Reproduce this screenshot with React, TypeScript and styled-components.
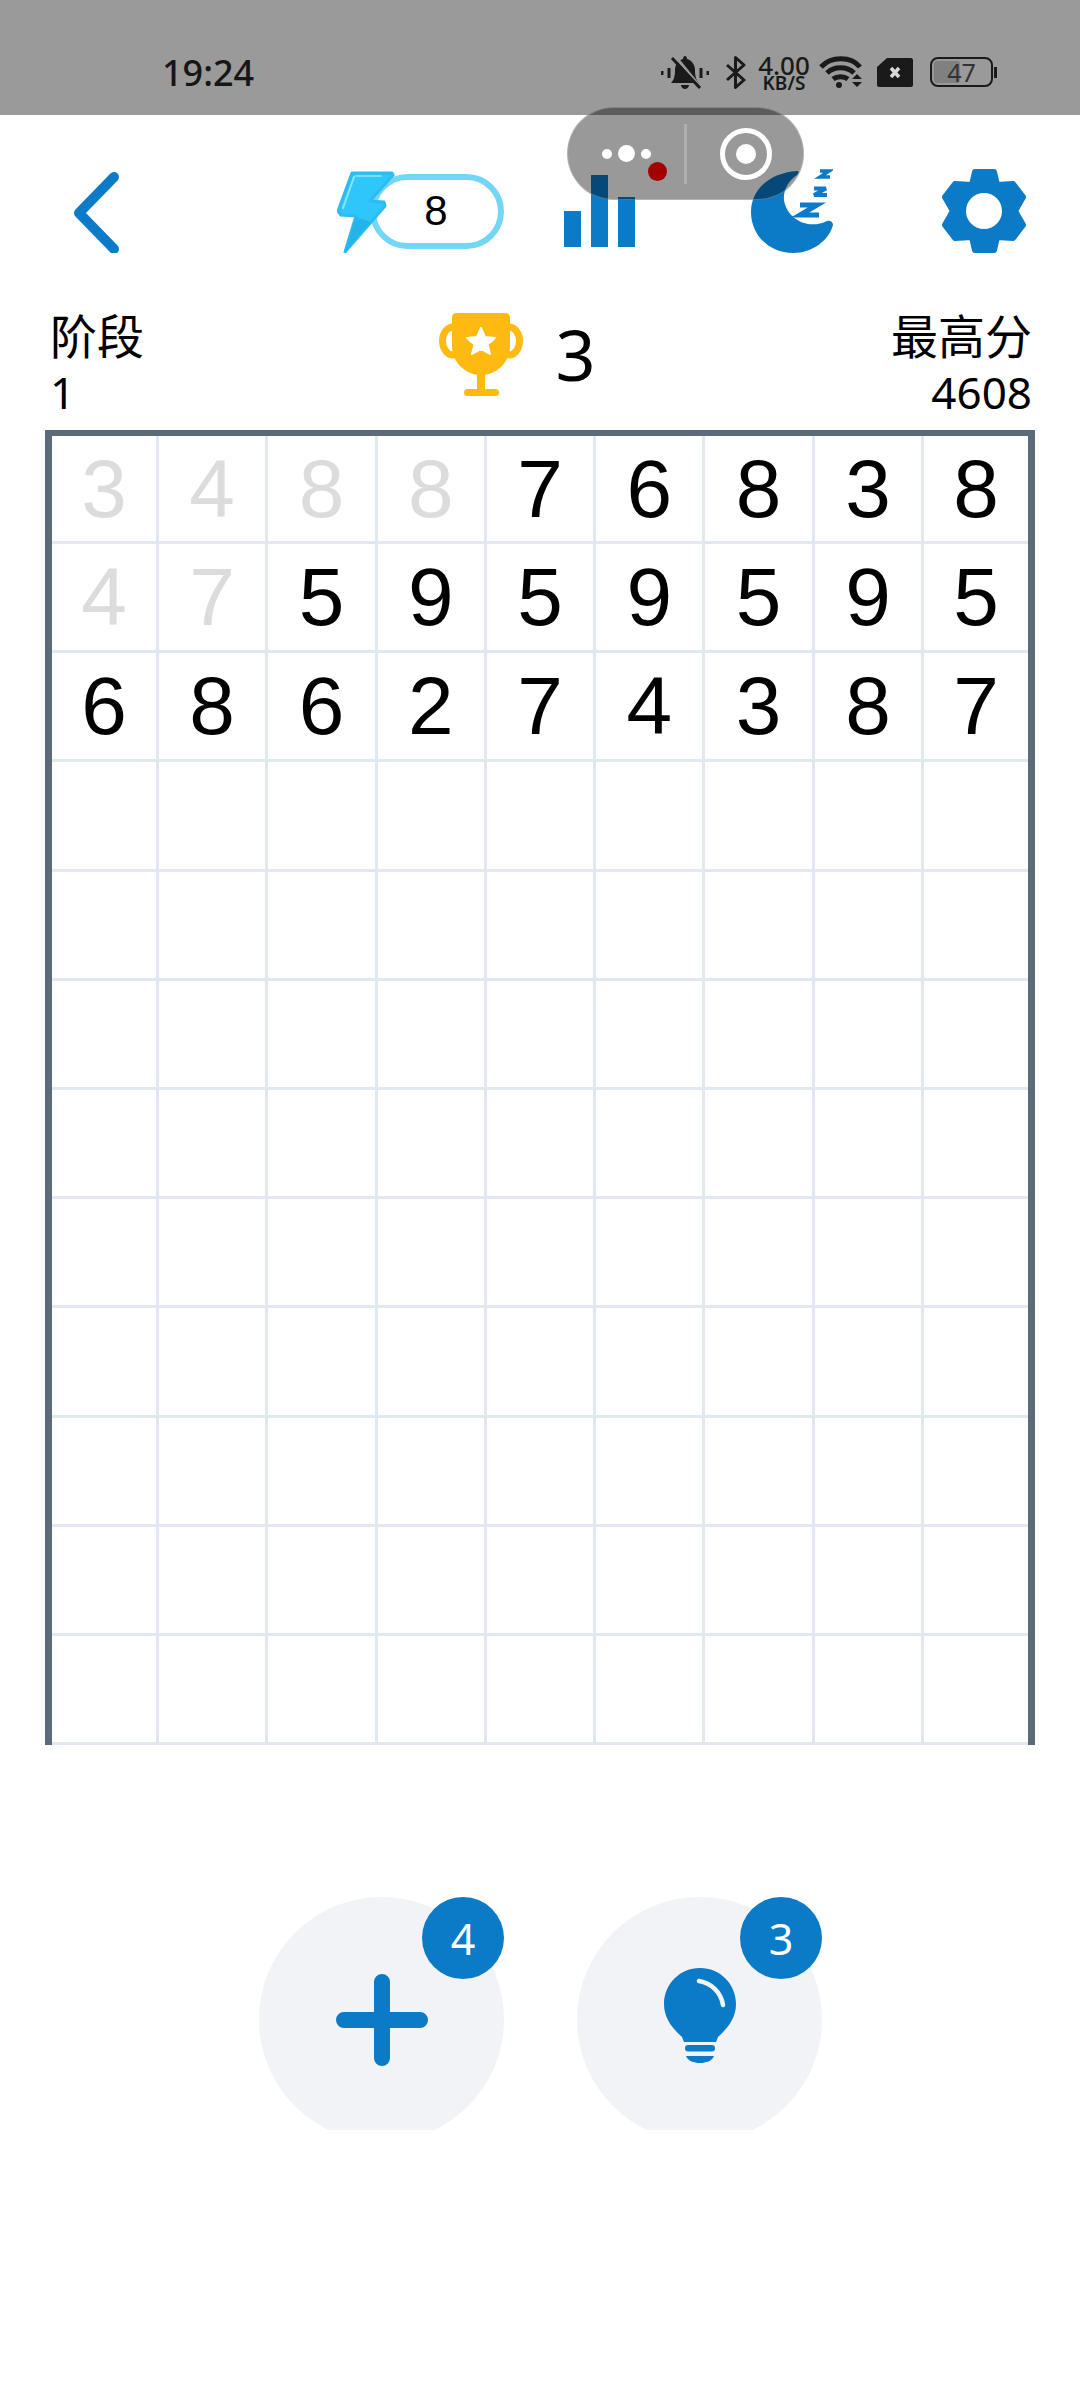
import React from "react";
import styled, { createGlobalStyle } from "styled-components";

const BLUE = "#0b7bc8";
const INK = "#1a1a1a";

const ROWS = [
  [3, 4, 8, 8, 7, 6, 8, 3, 8],
  [4, 7, 5, 9, 5, 9, 5, 9, 5],
  [6, 8, 6, 2, 7, 4, 3, 8, 7],
];
const DIMMED = [4, 2, 0];

const GlobalStyle = createGlobalStyle`
  html, body {
    margin: 0;
    padding: 0;
    background: #fff;
  }
  * {
    box-sizing: border-box;
  }
`;

export default function App() {
  const cells = [];
  for (let r = 0; r < 12; r++) {
    for (let c = 0; c < 9; c++) {
      const value = ROWS[r] ? ROWS[r][c] : null;
      cells.push(
        <Cell key={r + "-" + c} $dim={r < 3 && c < DIMMED[r]}>
          {value}
        </Cell>
      );
    }
  }

  return (
    <Page>
      <GlobalStyle />
      <StatusBar>
        <Clock>19:24</Clock>
        <StatusIcons>
          <svg width="48" height="33" viewBox="0 0 48 33">
            <path d="M10 27c3-3 4-7 4-13 0-6 4-10 8-11 0-2 1-3 2-3s2 1 2 3c4 1 8 5 8 11 0 6 1 10 4 13z" fill={INK} />
            <path d="M20 29h8c0 2-2 4-4 4s-4-2-4-4z" fill={INK} />
            <path d="M14 0l26 32" stroke="#9a9a9a" strokeWidth="3" />
            <path d="M11 2l28 30" stroke={INK} strokeWidth="3" />
            <path d="M1 15v4M8 12v10M40 12v10M47 15v4" stroke={INK} strokeWidth="3" />
          </svg>
          <Bluetooth width="21" height="33" viewBox="0 0 21 33">
            <path d="M2 9l17 15-8.500 7.500V1.500L19 9 2 24" fill="none" stroke={INK} strokeWidth="3" strokeLinejoin="round" />
          </Bluetooth>
          <Speed>
            <SpeedValue>4.00</SpeedValue>
            <SpeedUnit>KB/S</SpeedUnit>
          </Speed>
          <Wifi width="44" height="32" viewBox="0 0 44 32">
            <path d="M2 11c10-11 30-11 39 0" fill="none" stroke={INK} strokeWidth="5" />
            <path d="M8 17c7-7 20-7 27 0" fill="none" stroke={INK} strokeWidth="5" />
            <path d="M14 23c4-3 11-3 15 0" fill="none" stroke={INK} strokeWidth="5" />
            <circle cx="20" cy="29" r="3" fill={INK} />
            <path d="M33 23l5-5 5 5zM33 26h10l-5 5z" fill={INK} />
          </Wifi>
          <Sim width="36" height="29" viewBox="0 0 36 29">
            <path d="M10 0h24c1 0 2 1 2 2v25c0 1-1 2-2 2H2c-1 0-2-1-2-2V9z" fill={INK} />
            <path d="M14 10l8 9M22 10l-8 9" stroke="#d8d8d8" strokeWidth="3.500" />
          </Sim>
          <Battery>
            <BatteryFill />
            <BatteryText>47</BatteryText>
          </Battery>
          <BatteryNub />
        </StatusIcons>
      </StatusBar>

      <Capsule>
        <CapsuleMenu>
          <Dot $size={10} />
          <Dot $size={17} />
          <Dot $size={10} />
          <RedDot />
        </CapsuleMenu>
        <CapsuleDivider />
        <CapsuleClose>
          <CloseInner />
        </CapsuleClose>
      </Capsule>

      <TopBar>
        <svg width="50" height="84" viewBox="0 0 50 84">
          <path d="M45 8L10 44l35 36" fill="none" stroke={BLUE} strokeWidth="10" strokeLinecap="round" strokeLinejoin="round" />
        </svg>
        <EnergyGroup>
          <EnergyPill>8</EnergyPill>
          <Bolt width="58" height="82" viewBox="0 0 58 82">
            <path d="M15 2H55L56 4 33 30 47 31 48 35 8 81 19 45 4 44 1 40z" fill="#2fc6fb" stroke="#2bbdf2" strokeWidth="3" strokeLinejoin="round" />
            <path d="M17 6L6 37" fill="none" stroke="#8fe3ff" strokeWidth="2" strokeLinecap="round" />
            <path d="M19 5H44" fill="none" stroke="#7adcff" strokeWidth="2" strokeLinecap="round" />
            <path d="M19 45L8 81 34 51 22 47z" fill="#25b4ea" />
          </Bolt>
        </EnergyGroup>
        <Chart>
          <ChartBar $h={36} />
          <ChartBar $h={72} />
          <ChartBar $h={50} />
        </Chart>
        <Moon width="82" height="84" viewBox="0 -1 82 84">
          <path d="M46 1C18 3 0 20 0 42c0 23 18 41 42 41 20 0 36-13 40-28 0-3-3-5-6-4-18 9-40-1-43-21-1-10 5-20 13-25 2-2 2-4 0-4z" fill={BLUE} />
          <path d="M49 35h17L49 45h19" fill="none" stroke={BLUE} strokeWidth="5" />
          <path d="M63 18.500h12L63 25h13" fill="none" stroke={BLUE} strokeWidth="4" />
          <path d="M69 1h9L69 7h10" fill="none" stroke={BLUE} strokeWidth="3.500" />
        </Moon>
        <Gear width="84" height="84" viewBox="0 0 84 84">
          <path
            d="M33 3H52L55 16 71 15 81 28 73 42 81 56 71 69 55 68 52 81H33L30 68 13 69 3 56 11 42 3 28 13 15 30 16z"
            fill={BLUE}
            stroke={BLUE}
            strokeWidth="6"
            strokeLinejoin="round"
          />
          <circle cx="42" cy="42" r="18" fill="#fff" />
        </Gear>
      </TopBar>

      <Stats>
        <StatColumn>
          <StatLabel>阶段</StatLabel>
          <StatValue>1</StatValue>
        </StatColumn>
        <TrophyGroup>
          <svg width="84" height="83" viewBox="0 0 84 83">
            <ellipse cx="14" cy="28" rx="10.500" ry="14" fill="none" stroke="#ffba12" strokeWidth="7" />
            <ellipse cx="70" cy="28" rx="10.500" ry="14" fill="none" stroke="#ffba12" strokeWidth="7" />
            <path d="M17 0h50c2 0 4 2 4 4v29c0 16-13 29-29 29S13 49 13 33V4c0-2 2-4 4-4z" fill="#ffba12" />
            <rect x="38" y="60" width="8" height="18" fill="#ffba12" />
            <rect x="25" y="76" width="35" height="7" rx="3.500" fill="#ffba12" />
            <path
              d="M42 15l4 9 10 1-7.500 6.500L51 41l-9-5-9 5 2.500-9.500L28 25l10-1z"
              fill="#fff"
              stroke="#fff"
              strokeWidth="2"
              strokeLinejoin="round"
            />
          </svg>
          <TrophyCount>3</TrophyCount>
        </TrophyGroup>
        <StatColumn $right>
          <StatLabel>最高分</StatLabel>
          <StatValue>4608</StatValue>
        </StatColumn>
      </Stats>

      <Board>{cells}</Board>

      <Actions>
        <ActionButton>
          <Disc>
            <svg width="92" height="92" viewBox="0 0 92 92">
              <path d="M46 8v76M8 46h76" stroke={BLUE} strokeWidth="16" strokeLinecap="round" />
            </svg>
          </Disc>
          <Badge>4</Badge>
        </ActionButton>
        <ActionButton>
          <Disc>
            <BulbIcon width="72" height="96" viewBox="0 0 72 96">
              <path d="M36 0C16 0 0 16 0 36c0 14 8 24 18 33l2 5h32l2-5c10-9 18-19 18-33C72 16 56 0 36 0z" fill={BLUE} />
              <path d="M35 13c12 2 22 11 24 24" fill="none" stroke="#f1f3f7" strokeWidth="4.500" strokeLinecap="round" />
              <rect x="21" y="77" width="30" height="6.500" rx="3.250" fill={BLUE} />
              <path d="M22 88h28c-2 5-8 7-14 7s-12-2-14-7z" fill={BLUE} />
            </BulbIcon>
          </Disc>
          <Badge>3</Badge>
        </ActionButton>
      </Actions>
    </Page>
  );
}

const Page = styled.div`
  position: relative;
  width: 1080px;
  height: 2400px;
  overflow: hidden;
  background: #fff;
`;

const StatusBar = styled.div`
  display: flex;
  align-items: center;
  justify-content: space-between;
  height: 115px;
  padding: 29px 83px 0 162px;
  background: #9a9a9a;
`;

const Clock = styled.div`
  font-family: "Noto Sans", sans-serif;
  font-size: 36px;
  font-weight: 500;
  color: #161616;
`;

const StatusIcons = styled.div`
  display: flex;
  align-items: center;
`;

const Bluetooth = styled.svg`
  margin-left: 16px;
`;

const Speed = styled.div`
  display: flex;
  flex-direction: column;
  align-items: center;
  width: 50px;
  margin-left: 13px;
  font-family: "Noto Sans", sans-serif;
  font-weight: 500;
  color: ${INK};
`;

const SpeedValue = styled.div`
  font-size: 26px;
  line-height: 21px;
`;

const SpeedUnit = styled.div`
  font-size: 19px;
  font-weight: 600;
  line-height: 14px;
`;

const Wifi = styled.svg`
  margin-left: 10px;
`;

const Sim = styled.svg`
  margin-left: 14px;
`;

const Battery = styled.div`
  position: relative;
  display: flex;
  align-items: center;
  justify-content: center;
  width: 63px;
  height: 30px;
  margin-left: 17px;
  border: 2px solid ${INK};
  border-radius: 8px;
`;

const BatteryFill = styled.div`
  position: absolute;
  left: 2px;
  top: 2px;
  bottom: 2px;
  width: 26px;
  border-radius: 3px;
  background: #808080;
`;

const BatteryText = styled.span`
  position: relative;
  font-family: "Noto Sans", sans-serif;
  font-size: 25px;
  line-height: 1;
  color: #333;
`;

const BatteryNub = styled.div`
  width: 3px;
  height: 11px;
  margin-left: 1px;
  background: ${INK};
`;

const Capsule = styled.div`
  position: absolute;
  left: 567px;
  top: 107px;
  z-index: 5;
  display: flex;
  align-items: center;
  width: 237px;
  height: 93px;
  border: 1px solid rgba(255, 255, 255, 0.25);
  border-radius: 47px;
  background: rgba(0, 0, 0, 0.4);
`;

const CapsuleMenu = styled.div`
  position: relative;
  display: flex;
  align-items: center;
  justify-content: center;
  gap: 6px;
  width: 116px;
  height: 100%;
`;

const Dot = styled.div<{ $size: number }>`
  width: ${(p) => p.$size}px;
  height: ${(p) => p.$size}px;
  border-radius: 50%;
  background: #fff;
`;

const RedDot = styled.div`
  position: absolute;
  left: 80px;
  top: 54px;
  width: 19px;
  height: 19px;
  border-radius: 50%;
  background: #a50000;
`;

const CapsuleDivider = styled.div`
  width: 3px;
  height: 60px;
  background: rgba(255, 255, 255, 0.22);
`;

const CapsuleClose = styled.div`
  display: flex;
  align-items: center;
  justify-content: center;
  width: 52px;
  height: 52px;
  margin-left: 33px;
  border: 5px solid #fff;
  border-radius: 50%;
`;

const CloseInner = styled.div`
  width: 20px;
  height: 20px;
  border-radius: 50%;
  background: #fff;
`;

const TopBar = styled.div`
  display: flex;
  align-items: center;
  height: 191px;
  padding: 54px 0 53px 69px;
`;

const EnergyGroup = styled.div`
  position: relative;
  width: 166px;
  height: 75px;
  margin-left: 219px;
`;

const EnergyPill = styled.div`
  display: flex;
  align-items: center;
  justify-content: center;
  width: 134px;
  height: 75px;
  margin-left: 32px;
  padding-right: 2px;
  border: 6px solid #74d6f6;
  border-radius: 38px;
  font-family: "Liberation Sans", sans-serif;
  font-size: 42px;
  color: #000;
`;

const Bolt = styled.svg`
  position: absolute;
  left: -1px;
  top: -3px;
`;

const Chart = styled.div`
  display: flex;
  align-items: flex-end;
  gap: 10px;
  height: 72px;
  margin-left: 60px;
`;

const ChartBar = styled.div<{ $h: number }>`
  width: 17px;
  height: ${(p) => p.$h}px;
  background: ${BLUE};
`;

const Moon = styled.svg`
  margin-left: 116px;
`;

const Gear = styled.svg`
  margin-left: 109px;
`;

const Stats = styled.div`
  display: flex;
  align-items: flex-start;
  justify-content: space-between;
  height: 114px;
  padding: 0 48px 0 50px;
`;

const StatColumn = styled.div<{ $right?: boolean }>`
  display: flex;
  flex-direction: column;
  align-items: ${(p) => (p.$right ? "flex-end" : "flex-start")};
`;

const StatLabel = styled.div`
  height: 55px;
  font-family: "Noto Sans CJK SC", sans-serif;
  font-size: 47px;
  line-height: 55px;
  color: #000;
`;

const StatValue = styled.div`
  height: 59px;
  padding-top: 3px;
  font-family: "Noto Sans", sans-serif;
  font-size: 44px;
  line-height: 56px;
  color: #000;
`;

const TrophyGroup = styled.div`
  display: flex;
  align-items: center;
  gap: 32px;
  margin-top: 7px;
`;

const TrophyCount = styled.div`
  font-family: "Noto Sans", sans-serif;
  font-size: 70px;
  line-height: 83px;
  color: #000;
`;

const Board = styled.div`
  display: grid;
  grid-template-columns: 107px repeat(7, 109.3px) 1fr;
  grid-template-rows: 108px repeat(11, 109.2px);
  width: 990px;
  margin: 10px 0 0 45px;
  border: 7px solid #5c6b7a;
  border-top-width: 6px;
  border-bottom: 0;
`;

const Cell = styled.div<{ $dim?: boolean }>`
  display: flex;
  align-items: center;
  justify-content: center;
  border-right: 3px solid #e2e8f0;
  border-bottom: 3px solid #e2e8f0;
  font-family: "Liberation Sans", sans-serif;
  font-size: 82px;
  line-height: 1;
  color: ${(p) => (p.$dim ? "#dcdcdc" : "#000")};

  &:nth-child(9n) {
    border-right: 0;
  }
`;

const Actions = styled.div`
  display: flex;
  justify-content: center;
  gap: 73px;
  margin-top: 152px;
  padding-left: 1px;
`;

const ActionButton = styled.div`
  position: relative;
  width: 245px;
  height: 233px;
  overflow: hidden;
`;

const Disc = styled.div`
  display: flex;
  align-items: center;
  justify-content: center;
  width: 245px;
  height: 245px;
  border-radius: 50%;
  background: #f1f3f7;
`;

const BulbIcon = styled.svg`
  margin-top: -7px;
`;

const Badge = styled.div`
  position: absolute;
  right: 0;
  top: 0;
  display: flex;
  align-items: center;
  justify-content: center;
  width: 82px;
  height: 82px;
  border-radius: 50%;
  background: ${BLUE};
  font-family: "Noto Sans", sans-serif;
  font-size: 43px;
  color: #fff;
`;
